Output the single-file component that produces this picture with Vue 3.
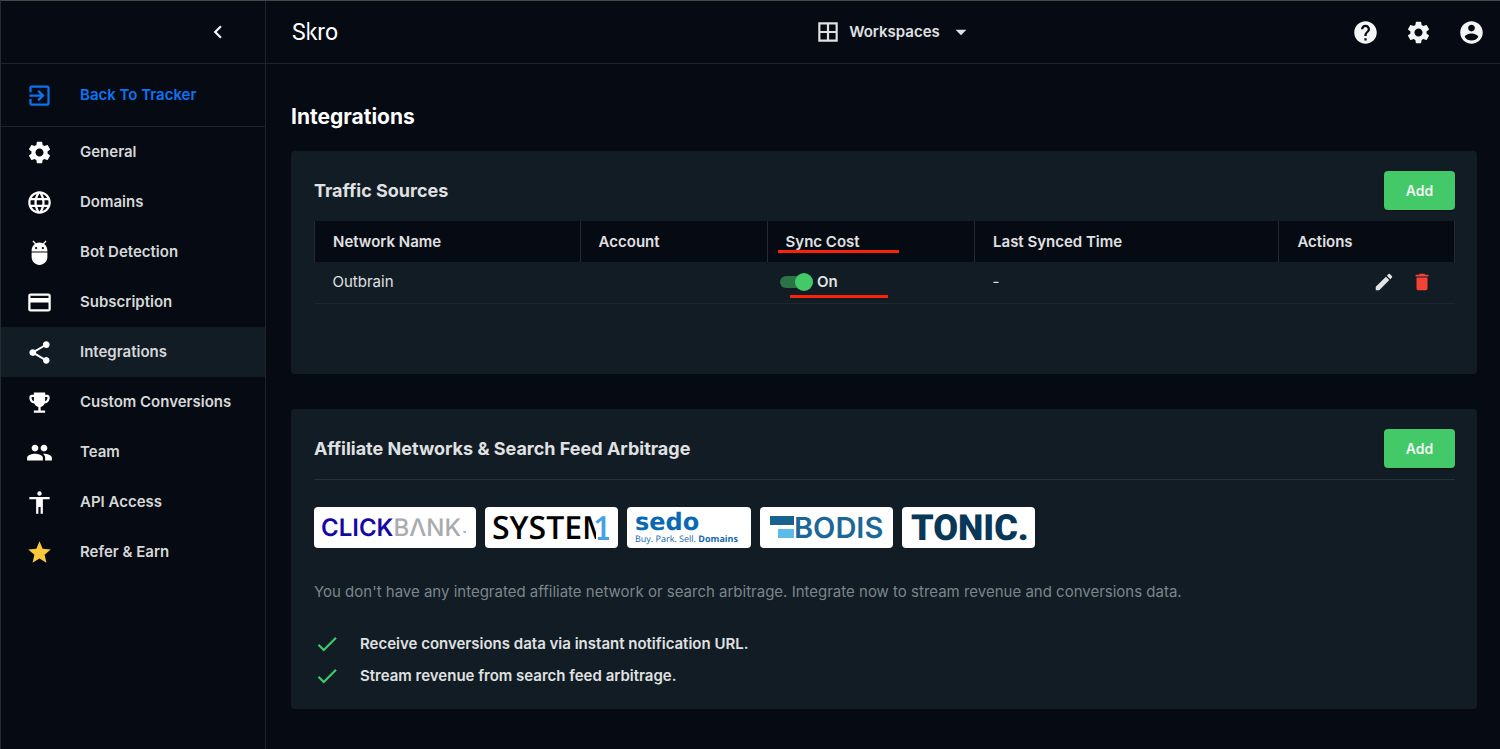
<script setup>
import { ref } from 'vue'

const icons = {
  exit: 'M10.09 15.59L11.5 17l5-5-5-5-1.41 1.41L12.67 11H3v2h9.67l-2.58 2.59zM19 3H5c-1.11 0-2 .9-2 2v4h2V5h14v14H5v-4H3v4c0 1.1.89 2 2 2h14c1.1 0 2-.9 2-2V5c0-1.1-.9-2-2-2z',
  gear: 'M19.14 12.94c.04-.3.06-.61.06-.94 0-.32-.02-.64-.07-.94l2.03-1.58c.18-.14.23-.41.12-.61l-1.92-3.32c-.12-.22-.37-.29-.59-.22l-2.39.96c-.5-.38-1.03-.7-1.62-.94l-.36-2.54c-.04-.24-.24-.41-.48-.41h-3.84c-.24 0-.43.17-.47.41l-.36 2.54c-.59.24-1.13.57-1.62.94l-2.39-.96c-.22-.08-.47 0-.59.22L2.74 8.87c-.12.21-.08.47.12.61l2.03 1.58c-.05.3-.09.63-.09.94s.02.64.07.94l-2.03 1.58c-.18.14-.23.41-.12.61l1.92 3.32c.12.22.37.29.59.22l2.39-.96c.5.38 1.03.7 1.62.94l.36 2.54c.05.24.24.41.48.41h3.84c.24 0 .44-.17.47-.41l.36-2.54c.59-.24 1.13-.56 1.62-.94l2.39.96c.22.08.47 0 .59-.22l1.92-3.32c.12-.22.07-.47-.12-.61l-2.01-1.58zM12 15.6c-1.98 0-3.6-1.62-3.6-3.6s1.62-3.6 3.6-3.6 3.6 1.62 3.6 3.6-1.62 3.6-3.6 3.6z',
  globe: 'M11.99 2C6.47 2 2 6.48 2 12s4.47 10 9.99 10C17.52 22 22 17.52 22 12S17.52 2 11.99 2zm6.93 6h-2.95c-.32-1.25-.78-2.45-1.38-3.56 1.84.63 3.37 1.91 4.33 3.56zM12 4.04c.83 1.2 1.48 2.53 1.91 3.96h-3.82c.43-1.43 1.08-2.76 1.91-3.96zM4.26 14C4.1 13.36 4 12.69 4 12s.1-1.36.26-2h3.38c-.08.66-.14 1.32-.14 2 0 .68.06 1.34.14 2H4.26zm.82 2h2.95c.32 1.25.78 2.45 1.38 3.56-1.84-.63-3.37-1.9-4.33-3.56zm2.95-8H5.08c.96-1.66 2.49-2.93 4.33-3.56C8.81 5.55 8.35 6.75 8.03 8zM12 19.96c-.83-1.2-1.48-2.53-1.91-3.96h3.82c-.43 1.43-1.08 2.76-1.91 3.96zM14.34 14H9.66c-.09-.66-.16-1.32-.16-2 0-.68.07-1.35.16-2h4.68c.09.65.16 1.32.16 2 0 .68-.07 1.34-.16 2zm.25 5.56c.6-1.11 1.06-2.31 1.38-3.56h2.95c-.96 1.65-2.49 2.93-4.33 3.56zM16.36 14c.08-.66.14-1.32.14-2 0-.68-.06-1.34-.14-2h3.38c.16.64.26 1.31.26 2s-.1 1.36-.26 2h-3.38z',
  bot: 'M5 16c0 3.87 3.13 7 7 7s7-3.13 7-7v-4H5v4zM16.12 4.37l2.1-2.1-.82-.83-2.3 2.31C14.16 3.28 13.12 3 12 3s-2.16.28-3.09.75L6.6 1.44l-.82.83 2.1 2.1C6.14 5.64 5 7.68 5 10v1h14v-1c0-2.32-1.14-4.36-2.88-5.63zM9 9c-.55 0-1-.45-1-1s.45-1 1-1 1 .45 1 1-.45 1-1 1zm6 0c-.55 0-1-.45-1-1s.45-1 1-1 1 .45 1 1-.45 1-1 1z',
  card: 'M20 4H4c-1.11 0-1.99.89-1.99 2L2 18c0 1.11.89 2 2 2h16c1.11 0 2-.89 2-2V6c0-1.11-.89-2-2-2zm0 14H4v-6h16v6zm0-10H4V6h16v2z',
  share: 'M18 16.08c-.76 0-1.44.3-1.96.77L8.91 12.7c.05-.23.09-.46.09-.7s-.04-.47-.09-.7l7.05-4.11c.54.5 1.25.81 2.04.81 1.66 0 3-1.34 3-3s-1.34-3-3-3-3 1.34-3 3c0 .24.04.47.09.7L8.04 9.81C7.5 9.31 6.79 9 6 9c-1.66 0-3 1.34-3 3s1.34 3 3 3c.79 0 1.5-.31 2.04-.81l7.12 4.16c-.05.21-.08.43-.08.65 0 1.61 1.31 2.92 2.92 2.92s2.92-1.31 2.92-2.92-1.31-2.92-2.92-2.92z',
  trophy: 'M19 5h-2V3H7v2H5c-1.1 0-2 .9-2 2v1c0 2.55 1.92 4.63 4.39 4.94.63 1.5 1.98 2.63 3.61 2.96V19H7v2h10v-2h-4v-3.1c1.63-.33 2.98-1.46 3.61-2.96C19.08 12.63 21 10.55 21 8V7c0-1.1-.9-2-2-2zM5 8V7h2v3.82C5.84 10.4 5 9.3 5 8zm14 0c0 1.3-.84 2.4-2 2.82V7h2v1z',
  team: 'M16 11c1.66 0 2.99-1.34 2.99-3S17.66 5 16 5c-1.66 0-3 1.34-3 3s1.34 3 3 3zm-8 0c1.66 0 2.99-1.34 2.99-3S9.66 5 8 5C6.34 5 5 6.34 5 8s1.34 3 3 3zm0 2c-2.33 0-7 1.17-7 3.5V19h14v-2.5c0-2.33-4.67-3.5-7-3.5zm8 0c-.29 0-.62.02-.97.05 1.16.84 1.97 1.97 1.97 3.45V19h6v-2.5c0-2.33-4.67-3.5-7-3.5z',
  person: 'M12 2c1.1 0 2 .9 2 2s-.9 2-2 2-2-.9-2-2 .9-2 2-2zm9 7h-6v13h-2v-6h-2v6H9V9H3V7h18v2z',
  star: 'M12 17.27L18.18 21l-1.64-7.03L22 9.24l-7.19-.61L12 2 9.19 8.63 2 9.24l5.46 4.73L5.82 21z',
  chevron: 'M15.41 7.41L14 6l-6 6 6 6 1.41-1.41L10.83 12z',
  grid: 'M3 3v18h18V3H3zm8 16H5v-6h6v6zm0-8H5V5h6v6zm8 8h-6v-6h6v6zm0-8h-6V5h6v6z',
  caret: 'M7 10l5 5 5-5z',
  help: 'M12 2C6.48 2 2 6.48 2 12s4.48 10 10 10 10-4.48 10-10S17.52 2 12 2zm1 17h-2v-2h2v2zm2.07-7.75l-.9.92C13.45 12.9 13 13.5 13 15h-2v-.5c0-1.1.45-2.1 1.17-2.83l1.24-1.26c.37-.36.59-.86.59-1.41 0-1.1-.9-2-2-2s-2 .9-2 2H8c0-2.21 1.79-4 4-4s4 1.79 4 4c0 .88-.36 1.68-.93 2.25z',
  account: 'M12 2C6.48 2 2 6.48 2 12s4.48 10 10 10 10-4.48 10-10S17.52 2 12 2zm0 3c1.66 0 3 1.34 3 3s-1.34 3-3 3-3-1.34-3-3 1.34-3 3-3zm0 14.2c-2.5 0-4.71-1.28-6-3.22.03-1.99 4-3.08 6-3.08 1.99 0 5.97 1.09 6 3.08-1.29 1.94-3.5 3.22-6 3.22z',
  edit: 'M3 17.25V21h3.75L17.81 9.94l-3.75-3.75L3 17.25zM20.71 7.04c.39-.39.39-1.02 0-1.41l-2.34-2.34c-.39-.39-1.02-.39-1.41 0l-1.83 1.83 3.75 3.75 1.83-1.83z',
  trash: 'M6 19c0 1.1.9 2 2 2h8c1.1 0 2-.9 2-2V7H6v12zM19 4h-3.5l-1-1h-5l-1 1H5v2h14V4z',
  check: 'M9 16.17L4.83 12l-1.42 1.41L9 19 21 7l-1.41-1.41z',
}

const menu = [
  { label: 'General', icon: 'gear' },
  { label: 'Domains', icon: 'globe' },
  { label: 'Bot Detection', icon: 'bot' },
  { label: 'Subscription', icon: 'card' },
  { label: 'Integrations', icon: 'share', active: true },
  { label: 'Custom Conversions', icon: 'trophy' },
  { label: 'Team', icon: 'team' },
  { label: 'API Access', icon: 'person' },
  { label: 'Refer & Earn', icon: 'star', gold: true },
]

const tools = [
  { label: 'Help', icon: 'help' },
  { label: 'Settings', icon: 'gear' },
  { label: 'Profile', icon: 'account' },
]

const benefits = [
  'Receive conversions data via instant notification URL.',
  'Stream revenue from search feed arbitrage.',
]

const syncCost = ref(true)
</script>

<template>
  <div class="app">
    <aside class="sidebar">
      <div class="collapse-row">
        <button type="button" class="icon-button" aria-label="Collapse menu">
          <svg class="icon medium" viewBox="0 0 24 24"><path :d="icons.chevron" /></svg>
        </button>
      </div>
      <a class="nav-link back" href="#tracker">
        <svg class="icon large" viewBox="0 0 24 24"><path :d="icons.exit" /></svg>
        <span>Back To Tracker</span>
      </a>
      <nav>
        <a
          v-for="item in menu"
          :key="item.label"
          class="nav-link"
          :class="{ active: item.active, gold: item.gold }"
          href="#settings"
        >
          <svg class="icon large" viewBox="0 0 24 24"><path :d="icons[item.icon]" /></svg>
          <span>{{ item.label }}</span>
        </a>
      </nav>
    </aside>

    <div class="page">
      <header class="topbar">
        <svg class="brand" viewBox="0 0 56 32" role="img" aria-label="Skro">
          <text x="0" y="24">Skro</text>
          <path class="brand-gap" d="M18 6V25" />
        </svg>
        <button type="button" class="workspaces">
          <svg class="icon medium" viewBox="0 0 24 24"><path :d="icons.grid" /></svg>
          <span>Workspaces</span>
          <svg class="icon medium" viewBox="0 0 24 24"><path :d="icons.caret" /></svg>
        </button>
        <div class="tools">
          <button v-for="tool in tools" :key="tool.label" type="button" class="icon-button" :aria-label="tool.label">
            <svg class="icon large" viewBox="0 0 24 24"><path :d="icons[tool.icon]" /></svg>
          </button>
        </div>
      </header>

      <main>
        <h1>Integrations</h1>

        <section class="card sources">
          <div class="card-head">
            <h2>Traffic Sources</h2>
            <button type="button" class="add">Add</button>
          </div>
          <table>
            <thead>
              <tr>
                <th class="col-name">Network Name</th>
                <th class="col-account">Account</th>
                <th class="col-sync"><span class="marked mark-head">Sync Cost</span></th>
                <th class="col-time">Last Synced Time</th>
                <th>Actions</th>
              </tr>
            </thead>
            <tbody>
              <tr>
                <td>Outbrain</td>
                <td></td>
                <td class="sync-cell">
                  <label class="switch marked mark-row">
                    <input v-model="syncCost" type="checkbox" />
                    <span>On</span>
                  </label>
                </td>
                <td>-</td>
                <td class="actions-cell">
                  <div class="actions">
                    <button type="button" class="icon-button" aria-label="Edit">
                      <svg class="icon small" viewBox="0 0 24 24"><path :d="icons.edit" /></svg>
                    </button>
                    <button type="button" class="icon-button danger" aria-label="Delete">
                      <svg class="icon small" viewBox="0 0 24 24"><path :d="icons.trash" /></svg>
                    </button>
                  </div>
                </td>
              </tr>
            </tbody>
          </table>
        </section>

        <section class="card networks">
          <div class="card-head">
            <h2>Affiliate Networks &amp; Search Feed Arbitrage</h2>
            <button type="button" class="add">Add</button>
          </div>
          <div class="logos">
            <svg class="logo wide" viewBox="0 0 162 41" role="img" aria-label="ClickBank">
              <text x="7" y="29" class="clickbank"><tspan class="click">CLICK</tspan><tspan class="bank">BΛNK</tspan></text>
              <text x="149" y="28" class="tm">™</text>
            </svg>
            <svg class="logo" viewBox="0 0 133 41" role="img" aria-label="System1">
              <clipPath id="system-cut"><path d="M0 0H111V41H0z" /></clipPath>
              <text x="7" y="32" class="system" clip-path="url(#system-cut)">SYSTEM</text>
              <text x="108" y="32" class="one">1</text>
              <path fill="#45a3df" d="M113 30H124V33H113z" />
            </svg>
            <svg class="logo slim" viewBox="0 0 124 41" role="img" aria-label="Sedo">
              <text x="8" y="23" class="sedo">sedo</text>
              <text x="8" y="35" class="sedo-tag">Buy. Park. Sell. <tspan class="strong">Domains</tspan></text>
            </svg>
            <svg class="logo" viewBox="0 0 133 41" role="img" aria-label="Bodis">
              <path fill="#17628f" d="M10 9H34V18H10z" />
              <path fill="#5bbbea" d="M18 22H34V31H18z" />
              <text x="34" y="31" class="bodis">BODIS</text>
            </svg>
            <svg class="logo" viewBox="0 0 133 41" role="img" aria-label="Tonic">
              <text x="9" y="33" class="tonic">TONIC.</text>
            </svg>
          </div>
          <p>You don't have any integrated affiliate network or search arbitrage. Integrate now to stream revenue and conversions data.</p>
          <ul>
            <li v-for="line in benefits" :key="line">
              <svg class="icon medium" viewBox="0 0 24 24"><path :d="icons.check" /></svg>
              <span>{{ line }}</span>
            </li>
          </ul>
        </section>
      </main>
    </div>
  </div>
</template>

<style>
body {
  background: #060a12;
}
</style>

<style scoped>
.app {
  display: flex;
  box-sizing: border-box;
  min-height: 100vh;
  border-top: 1px solid #434846;
  border-left: 1px solid #272b2f;
  color: #e0e1e2;
  font-family: Inter, Roboto, "Liberation Sans", sans-serif;
  font-size: 15px;
  line-height: 20px;
}
button {
  font: inherit;
  color: inherit;
  background: none;
  border: 0;
  padding: 0;
  cursor: pointer;
}
.icon {
  display: block;
  flex: none;
  fill: currentColor;
}
.small { width: 22px; height: 22px; }
.medium { width: 26px; height: 26px; }
.large { width: 27px; height: 27px; }
.icon-button {
  color: #f4f5f5;
}

.sidebar {
  flex: none;
  width: 264px;
  border-right: 1px solid #1f242b;
}
.collapse-row {
  display: flex;
  align-items: center;
  justify-content: flex-end;
  height: 62px;
  padding-right: 34px;
  border-bottom: 1px solid #1f242b;
}
.nav-link {
  display: flex;
  align-items: center;
  gap: 27px;
  height: 50px;
  padding-left: 25px;
  color: #d6d8d8;
  font-weight: 600;
  text-decoration: none;
}
.nav-link .icon {
  color: #fff;
}
.nav-link.back,
.nav-link.back .icon {
  color: #0b74f3;
}
.nav-link.back {
  height: 62px;
  border-bottom: 1px solid #1f242b;
}
.nav-link.active {
  background: #111c25;
}
.nav-link.gold .icon {
  color: #fbc83c;
}

.page {
  flex: 1;
  min-width: 0;
}
.topbar {
  display: grid;
  grid-template-columns: 1fr auto 1fr;
  align-items: center;
  height: 62px;
  padding: 0 15px 0 26px;
  border-bottom: 1px solid #1f242b;
}
.brand {
  width: 56px;
  height: 32px;
  fill: #fff;
  font-family: Roboto, sans-serif;
  font-size: 23px;
}
.brand-gap {
  stroke: #060a12;
  stroke-width: 1;
}
.workspaces {
  display: flex;
  align-items: center;
  gap: 8px;
  padding-left: 12px;
  font-weight: 600;
}
.tools {
  display: flex;
  justify-content: flex-end;
  gap: 26px;
}

main {
  padding: 41px 23px 40px 25px;
}
h1 {
  margin: 0;
  color: #fff;
  font-size: 21px;
  font-weight: 700;
  line-height: 24px;
}
h2 {
  margin: 0;
  font-size: 18px;
  font-weight: 700;
}
.card {
  box-sizing: border-box;
  padding: 20px 22px 17px 23px;
  border-radius: 4px;
  background: #111c24;
}
.sources {
  min-height: 223px;
  margin-top: 22px;
}
.networks {
  min-height: 300px;
  margin-top: 35px;
}
.card-head {
  display: flex;
  align-items: center;
  justify-content: space-between;
}
.add {
  width: 71px;
  height: 39px;
  border-radius: 4px;
  background: #43c968;
  color: #f1f3f2;
  font-size: 14px;
  font-weight: 600;
  box-shadow: 0 1px 2px rgba(0, 0, 0, 0.5);
}

table {
  width: 100%;
  margin-top: 11px;
  border-collapse: collapse;
  table-layout: fixed;
}
th,
td {
  box-sizing: border-box;
  padding: 0 18px;
  text-align: left;
}
th {
  height: 41px;
  border-left: 1px solid #242a31;
  border-right: 1px solid #242a31;
  background: #060a12;
  font-weight: 600;
}
td {
  height: 41px;
  border-bottom: 1px solid #1c272f;
}
.col-name { width: 23.3%; }
.col-account { width: 16.4%; }
.col-sync { width: 18.2%; }
.col-time { width: 26.7%; }
.sync-cell {
  padding-left: 13px;
}
.actions-cell {
  padding-right: 22px;
}
.actions {
  display: flex;
  justify-content: flex-end;
  gap: 16px;
}
.actions .icon-button { color: #e3e4e5; }
.actions .danger { color: #f44336; }

.switch {
  display: flex;
  align-items: center;
  gap: 4px;
  font-weight: 600;
}
.switch input {
  appearance: none;
  display: flex;
  align-items: center;
  width: 33px;
  height: 12px;
  margin: 0;
  border-radius: 6px;
  background: #2b7446;
}
.switch input::before {
  content: "";
  width: 18px;
  height: 18px;
  border-radius: 50%;
  background: #43c968;
}
.switch input:checked {
  justify-content: flex-end;
}
.marked {
  position: relative;
}
.marked::after {
  content: "";
  position: absolute;
  height: 3px;
  background: #fa2208;
}
.mark-head::after {
  left: -8px;
  bottom: -2px;
  width: 121px;
}
.mark-row::after {
  left: 10px;
  bottom: -6px;
  width: 98px;
}

.logos {
  display: flex;
  flex-wrap: wrap;
  gap: 9px;
  margin-top: 11px;
  padding-top: 27px;
  border-top: 1px solid #26313a;
}
.logo {
  width: 133px;
  height: 41px;
  border-radius: 4px;
  background: #fff;
  text-rendering: geometricPrecision;
}
.logo.wide { width: 162px; }
.logo.slim { width: 124px; }
.clickbank { font: 600 24px Inter, sans-serif; }
.click { fill: #1608a4; }
.bank { fill: #a9abae; font-weight: 500; }
.tm { fill: #1608a4; font: 5px Inter, sans-serif; }
.system { font: 600 32px "Open Sans", sans-serif; fill: #000; }
.one { font: 600 32px "Open Sans", sans-serif; fill: #45a3df; }
.sedo { font: 700 24px "DejaVu Sans", sans-serif; fill: #0a69b4; }
.sedo-tag { font: 9px "Open Sans", sans-serif; fill: #1268ae; }
.strong { font-weight: 700; }
.bodis { font: 600 29px Inter, sans-serif; fill: #1b6797; }
.tonic { font: 900 36px Roboto, sans-serif; fill: #083757; }

p {
  margin: 34px 0 0;
  color: #7d858b;
}
ul {
  margin: 26px 0 0;
  padding: 0;
  list-style: none;
}
li {
  display: flex;
  align-items: center;
  gap: 20px;
  height: 32px;
  font-weight: 600;
}
li .icon { color: #43c968; }
</style>
